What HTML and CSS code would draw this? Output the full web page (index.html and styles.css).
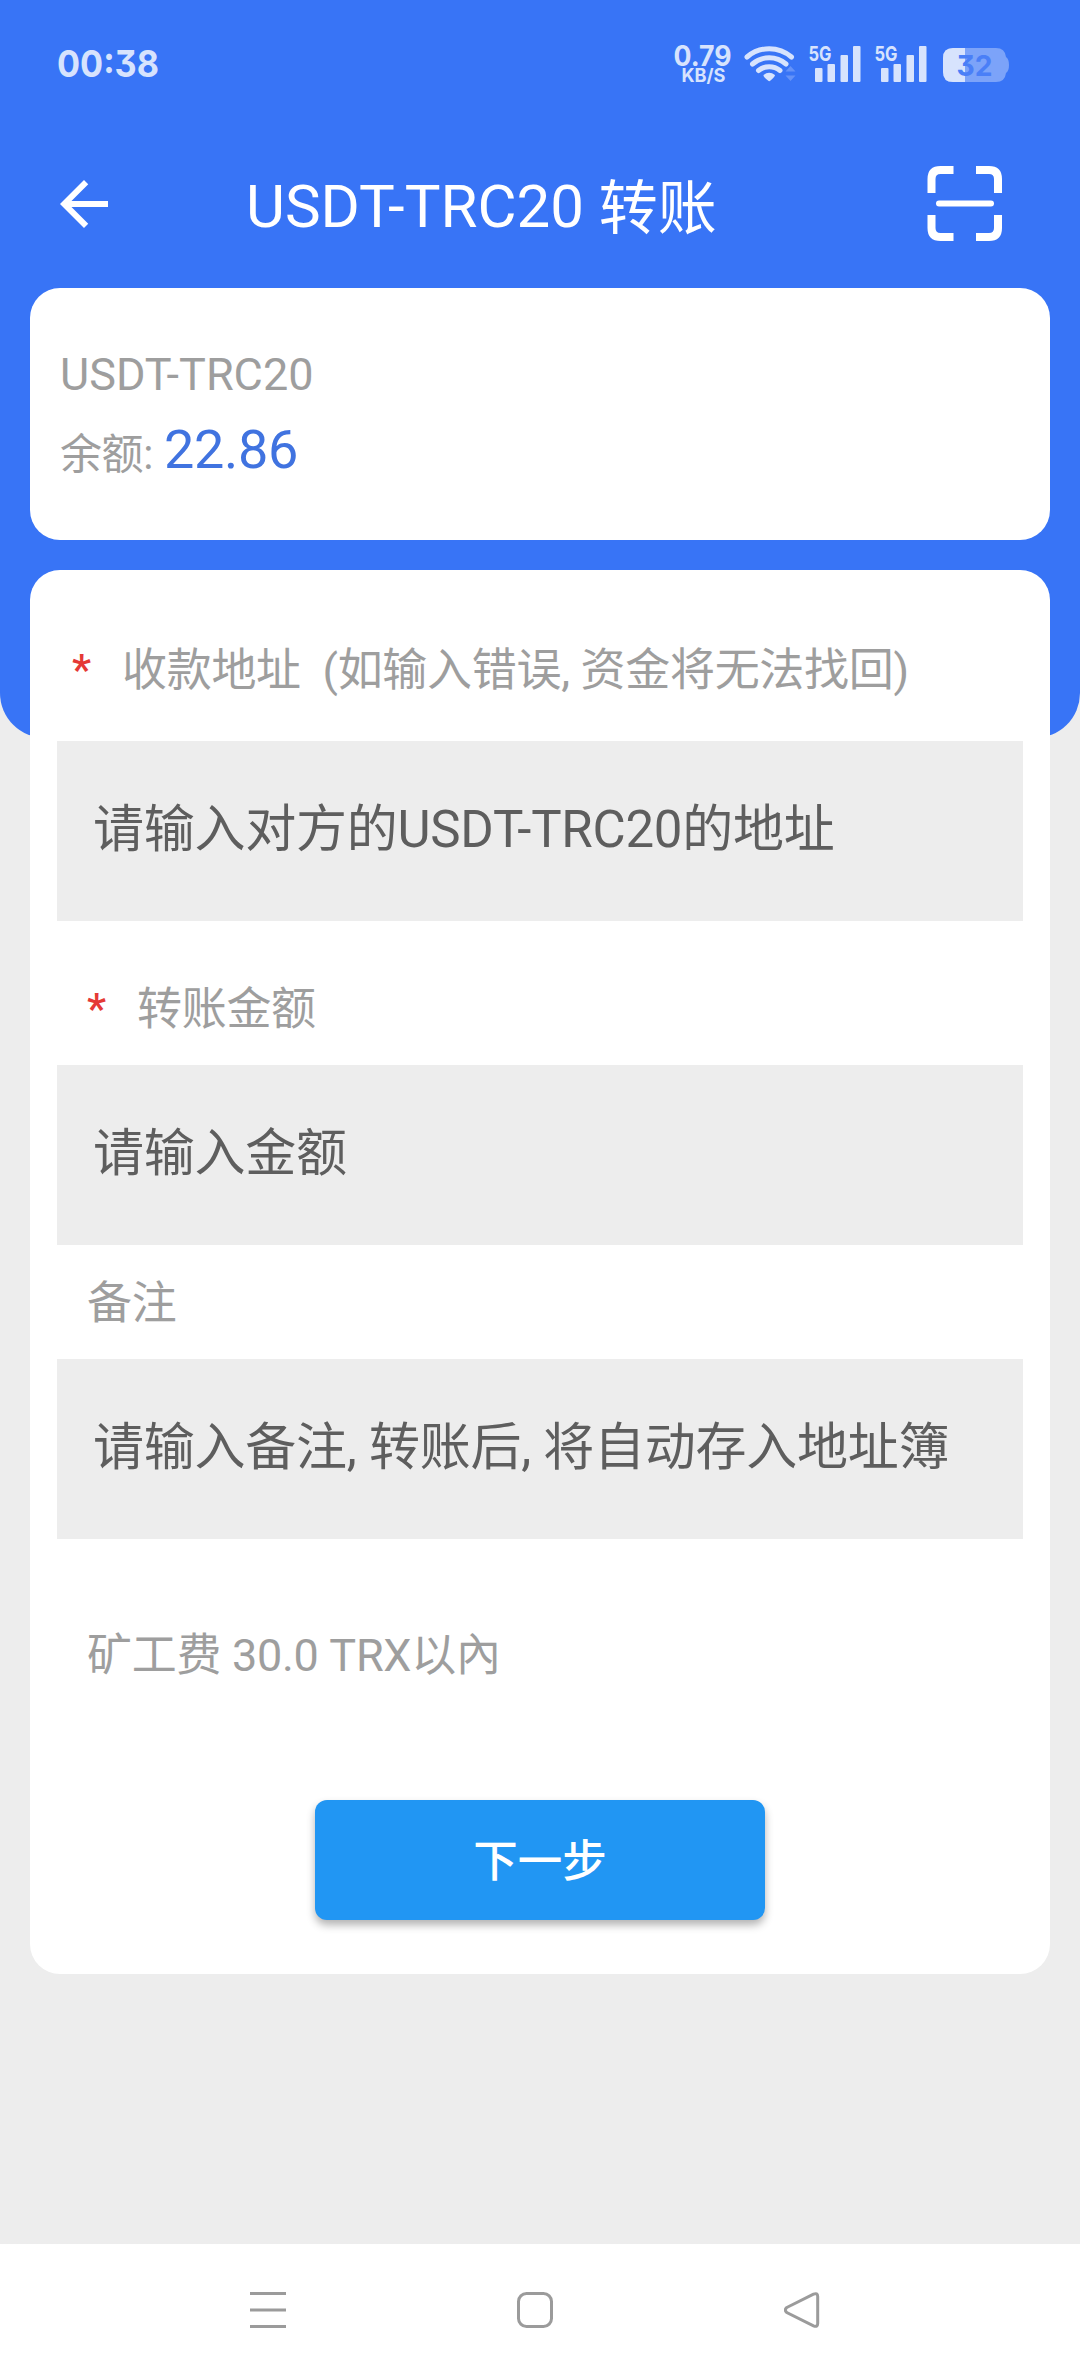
FILE: index.html
```html
<!DOCTYPE html>
<html lang="zh-CN">
<head>
  <meta charset="UTF-8">
  <title>USDT-TRC20 转账</title>
  <link rel="stylesheet" href="styles.css">
</head>
<body>
<div class="hero">
  <div class="status">
    <svg class="clock" width="120" height="50" viewBox="0 0 120 50">
      <text class="clock-text" x="3" y="37" textLength="102" lengthAdjust="spacingAndGlyphs">00:38</text>
    </svg>
    <svg class="status-icons" width="345" height="50" viewBox="670 40 345 50">
      <text class="speed" x="673.500" y="66" textLength="58" lengthAdjust="spacingAndGlyphs">0.79</text>
      <text class="unit" x="681.500" y="81.5" textLength="44" lengthAdjust="spacingAndGlyphs">KB/S</text>
      <!-- wifi -->
      <g class="wifi">
        <path d="M747 57A34 34 0 0 1 791.5 57"/>
        <path d="M752.5 64A25.500 25.500 0 0 1 786 64"/>
        <path d="M758.500 70.500A17 17 0 0 1 780 70.500"/>
      </g>
      <path class="on" d="M763.500 75Q769 70.500 775 75Q775 76.500 770.500 80.500Q769.200 82 768 80.500Q763 76.500 763.500 75Z"/>
      <path class="dim" d="M790.500 66l5 5.500h-10zM790.500 81l5-5.500h-10z"/>
      <!-- signal 1 -->
      <text class="net" x="808.500" y="61" textLength="23" lengthAdjust="spacingAndGlyphs">5G</text>
      <g class="on">
        <rect x="815" y="68" width="7.500" height="14" rx="1"/>
        <rect x="827.500" y="64" width="7.500" height="18" rx="1"/>
        <rect x="840.500" y="55" width="7.500" height="27" rx="1"/>
        <rect x="853" y="46" width="7.500" height="36" rx="1"/>
      </g>
      <!-- signal 2 -->
      <text class="net" x="874.500" y="61" textLength="23" lengthAdjust="spacingAndGlyphs">5G</text>
      <g class="on">
        <rect x="881" y="68" width="7.500" height="14" rx="1"/>
        <rect x="893.500" y="64" width="7.500" height="18" rx="1"/>
        <rect x="906.500" y="55" width="7.500" height="27" rx="1"/>
        <rect x="919" y="46" width="7.500" height="36" rx="1"/>
      </g>
      <!-- battery -->
      <path class="battery" d="M953 48h43q9 0 10 9q3 2 3 8t-3 8q-1 9-10 9h-43q-10 0-10-10v-14q0-10 10-10z"/>
      <path class="on" d="M965 48h-12q-10 0-10 10v14q0 10 10 10h12z"/>
      <text class="level" x="956.500" y="76" textLength="36" lengthAdjust="spacingAndGlyphs">32</text>
    </svg>
  </div>

  <div class="header">
    <svg class="back" width="72" height="72" viewBox="0 0 24 24">
      <path d="M20 11H7.830l5.590-5.590L12 4l-8 8 8 8 1.410-1.410L7.830 13H20v-2z"/>
    </svg>
    <h1 class="title">USDT-TRC20 <span class="title-cn">转账</span></h1>
    <svg class="scan" width="76" height="76" viewBox="0 0 76 76">
      <path class="corner" d="M4.500 27V13q0-9 9-9H26.500M49 4H62q9 0 9 9V27M71 49V62q0 9-9 9H49M26.500 71H13.500q-9 0-9-9V49"/>
      <path class="line" d="M12 37.500H64"/>
    </svg>
  </div>

  <div class="card balance">
    <div class="coin">USDT-TRC20</div>
    <div class="amount"><span class="amount-label">余额:</span><span class="amount-value">22.86</span></div>
  </div>
</div>

<form class="card form">
  <label class="label label-address" for="address"><span class="star">*</span>收款地址&nbsp; (如输入错误, 资金将无法找回)</label>
  <input class="field" type="text" id="address" placeholder="请输入对方的USDT-TRC20的地址">
  <label class="label label-money" for="money"><span class="star">*</span>转账金额</label>
  <input class="field" type="text" id="money" placeholder="请输入金额">
  <label class="label label-note" for="note">备注</label>
  <input class="field" type="text" id="note" placeholder="请输入备注, 转账后, 将自动存入地址簿">
  <p class="fee">矿工费 30.0 TRX以內</p>
  <button class="next" type="button">下一步</button>
</form>

<div class="nav">
  <svg width="36" height="36" viewBox="0 0 36 36"><path d="M0 1.500H36M0 18H36M0 34.500H36"/></svg>
  <svg width="36" height="36" viewBox="0 0 36 36"><rect x="1.500" y="1.500" width="33" height="33" rx="8"/></svg>
  <svg width="36" height="36" viewBox="0 0 36 36"><path d="M2.800 15.500L29.500 2.200Q33.700 0.500 33.700 4.500V31.500Q33.700 35.500 29.500 33.800L2.800 20.500Q-0.200 18 2.800 15.500Z"/></svg>
</div>
</body>
</html>
```
FILE: styles.css
```css
* {
  box-sizing: border-box;
}
body {
  margin: 0;
  height: 2376px;
  display: flex;
  flex-direction: column;
  background: #ededed;
  font-family: Roboto, "Noto Sans CJK SC", sans-serif;
}
.hero {
  height: 738px;
  padding: 0 30px;
  background: #3874f6;
  border-radius: 0 0 45px 45px;
  flex-shrink: 0;
}

/* status bar */
.status {
  height: 130px;
  padding: 40px 35px 0 24px;
  display: flex;
  justify-content: space-between;
}
.status text {
  font-family: Inter, sans-serif;
  font-weight: 700;
  fill: #d7e3fd;
}
.status .clock-text {
  font-size: 37px;
  font-feature-settings: "cv09";
}
.status .speed {
  font-size: 28px;
}
.status .unit {
  font-size: 18.5px;
}
.status .net {
  font-size: 20.5px;
}
.status .level {
  font-size: 29px;
  fill: #4a7ff7;
  font-feature-settings: "cv09";
}
.wifi path {
  fill: none;
  stroke: #d7e3fd;
  stroke-width: 5;
  stroke-linecap: round;
}
.on {
  fill: #d7e3fd;
}
.dim {
  fill: #6492f8;
}
.battery {
  fill: #7ca3f9;
}

/* title bar */
.header {
  height: 158px;
  padding: 0 47px 10px 18px;
  display: flex;
  align-items: center;
}
.back {
  fill: #fff;
}
.title {
  flex: 1;
  margin: 6px 0 0 126px;
  color: #fff;
  font-size: 60px;
  font-weight: 400;
  line-height: 80px;
}
.title-cn {
  font-size: 59px;
  vertical-align: -2px;
  line-height: 1;
}
.scan {
  fill: none;
  stroke: #fff;
}
.corner {
  stroke-width: 8;
}
.line {
  stroke-width: 6;
  stroke-linecap: round;
}

.card {
  background: #fff;
  border-radius: 30px;
}
.balance {
  height: 252px;
  padding: 57px 30px 0;
  color: #9e9e9e;
}
.coin {
  font-size: 45px;
  line-height: 60px;
}
.amount {
  margin-top: 12px;
  font-size: 54px;
  line-height: 66px;
}
.amount-label {
  font-size: 42px;
  line-height: 1;
  letter-spacing: -0.4px;
  vertical-align: -1px;
}
.amount-value {
  margin-left: 11px;
  color: #4073e0;
  letter-spacing: -0.3px;
}

/* transfer form, pulled up over the blue area */
.form {
  display: flex;
  flex-direction: column;
  flex-shrink: 0;
  height: 1404px;
  margin: -168px 30px 0;
  padding: 71px 27px 54px;
}
.label, .fee {
  color: #9e9e9e;
  font-size: 45px;
  line-height: 60px;
  letter-spacing: -0.3px;
  white-space: nowrap;
}
.label-address {
  padding-left: 15px;
  margin-bottom: 40px;
}
.label-money {
  padding-left: 30px;
  margin: 59px 0 25px;
}
.label-note {
  padding-left: 30px;
  margin: 29px 0 25px;
}
.star {
  display: inline-block;
  width: 50px;
  color: #e53935;
  font-size: 43px;
  font-weight: 500;
  line-height: 1;
  vertical-align: 2px;
}
.field {
  width: 100%;
  height: 180px;
  border: none;
  padding: 0 36px 4px;
  background: #ededed;
  font-family: inherit;
  font-size: 51px;
  letter-spacing: -0.25px;
}
.field::placeholder {
  color: #5e5e5e;
  opacity: 1;
}
.fee {
  margin: 87px 0 114px;
  padding-left: 30px;
}
.next {
  width: 450px;
  height: 120px;
  align-self: center;
  border: none;
  border-radius: 12px;
  padding: 0 0 5px;
  background: #2196f3;
  box-shadow: 0 5px 8px rgba(0, 0, 0, 0.3);
  color: #fff;
  font-family: inherit;
  font-size: 44.5px;
  font-weight: 500;
}

/* system navigation */
.nav {
  height: 132px;
  margin-top: auto;
  padding: 0 260px 0 250px;
  display: flex;
  justify-content: space-between;
  align-items: center;
  background: #fff;
}
.nav svg {
  fill: none;
  stroke: #9b9b9b;
  stroke-width: 3;
}
```
